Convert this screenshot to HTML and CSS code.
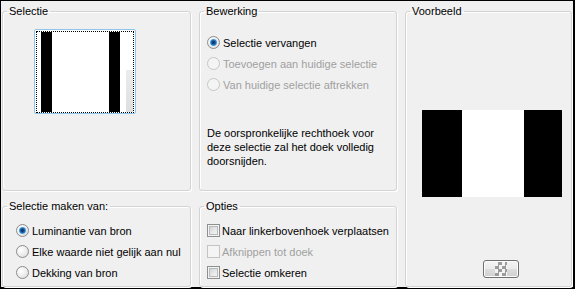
FILE: index.html
```html
<!DOCTYPE html>
<html lang="nl">
<head>
<meta charset="utf-8">
<title>Selectie</title>
<link rel="stylesheet" href="styles.css">
</head>
<body>
<div class="window">
  <fieldset class="group g-sel">
    <legend>Selectie</legend>
    <div class="thumb">
      <div class="thumb-inner">
        <span class="t-pad"></span><span class="t-bar"></span><span class="t-mid"></span><span class="t-bar"></span><span class="t-side"></span>
      </div>
    </div>
  </fieldset>

  <fieldset class="group g-bew">
    <legend>Bewerking</legend>
    <div class="rows rows-bew">
      <label class="opt"><span class="radio checked"></span>Selectie vervangen</label>
      <label class="opt disabled"><span class="radio"></span>Toevoegen aan huidige selectie</label>
      <label class="opt disabled"><span class="radio"></span>Van huidige selectie aftrekken</label>
    </div>
    <p class="note">De oorspronkelijke rechthoek voor<br>deze selectie zal het doek volledig<br>doorsnijden.</p>
  </fieldset>

  <fieldset class="group g-prev">
    <legend>Voorbeeld</legend>
    <div class="preview"><span class="p-black p-l"></span><span class="p-white"></span><span class="p-black p-r"></span></div>
    <button class="bg-btn" type="button"><span class="checker"></span></button>
  </fieldset>

  <fieldset class="group g-src">
    <legend>Selectie maken van:</legend>
    <div class="rows rows-src">
      <label class="opt"><span class="radio checked"></span>Luminantie van bron</label>
      <label class="opt"><span class="radio"></span>Elke waarde niet gelijk aan nul</label>
      <label class="opt"><span class="radio"></span>Dekking van bron</label>
    </div>
  </fieldset>

  <fieldset class="group g-opt">
    <legend>Opties</legend>
    <div class="rows rows-opt">
      <label class="opt"><span class="check"></span>Naar linkerbovenhoek verplaatsen</label>
      <label class="opt disabled"><span class="check"></span>Afknippen tot doek</label>
      <label class="opt"><span class="check"></span>Selectie omkeren</label>
    </div>
  </fieldset>
</div>
</body>
</html>
```

FILE: styles.css
```css
html, body {
  margin: 0;
  padding: 0;
  background: #000;
}

body {
  font-family: "Liberation Sans", Arial, sans-serif;
  font-size: 11px;
  color: #000;
}

.window {
  box-sizing: border-box;
  width: 575px;
  height: 289px;
  border-style: solid;
  border-color: #000;
  border-width: 1px 2px 2px 1px;
  background: #f0f0f0;
  padding: 4px 0 0 1px;
  display: grid;
  grid-template-columns: 189px 198px 167px;
  grid-template-rows: 186px 87px;
  column-gap: 8px;
  row-gap: 9px;
}

.group {
  margin: 0;
  padding: 0;
  min-width: 0;
  border: 1px solid #d3d3d3;
  border-radius: 3px;
  box-shadow: inset 1px 1px 0 #fff, 1px 1px 0 #fff;
}

.group legend {
  margin-left: 4px;
  padding: 0 2px;
  line-height: 13px;
  font-size: 11px;
}

.g-sel { grid-column: 1; grid-row: 1; }
.g-bew { grid-column: 2; grid-row: 1; }
.g-prev { grid-column: 3; grid-row: 1 / span 2; }
.g-src { grid-column: 1; grid-row: 2; }
.g-opt { grid-column: 2; grid-row: 2; }

/* selection thumbnail */
.thumb {
  box-sizing: border-box;
  width: 102px;
  height: 85px;
  margin: 11px 0 0 31px;
  border: 1px solid #8cc6ec;
  border-radius: 2px;
  padding: 1px 1px 0 1px;
  background: #fff;
}

.thumb-inner {
  box-sizing: border-box;
  height: 82px;
  border: 1px dotted #000;
  display: flex;
  background: #fff;
}

.t-pad { width: 4px; }
.t-bar { width: 11px; background: #000; }
.t-mid { width: 57px; }
.t-side {
  flex: 1;
  background: linear-gradient(to bottom, transparent 38px, #ececec 38px, #dedede) right top / 7px 100% no-repeat;
}

/* option rows */
.rows { display: flex; flex-direction: column; }
.rows-bew { padding: 14px 0 0 7px; }
.rows-src { padding: 7px 0 0 13px; }
.rows-opt { padding: 7px 0 0 7px; }

.opt {
  display: flex;
  align-items: center;
  height: 21px;
  white-space: nowrap;
}

.opt.disabled { color: #a0a0a0; }

.radio {
  flex: none;
  box-sizing: border-box;
  width: 13px;
  height: 13px;
  margin-right: 3px;
  border-radius: 50%;
  border: 1px solid #8c8c8c;
  background: radial-gradient(circle at 35% 35%, #ffffff 0, #ececec 55%, #d2d2d2 100%);
}

.radio.checked {
  background:
    radial-gradient(circle at 50% 50%, #0b2d57 0, #164d8c 1.6px, #2f86cf 2.8px, #79c0ee 3.4px, rgba(255,255,255,0) 3.9px),
    radial-gradient(circle at 35% 35%, #ffffff 0, #ececec 55%, #d2d2d2 100%);
}

.disabled .radio {
  border-color: #c6c6c6;
  background: #f4f4f4;
}

.check {
  flex: none;
  box-sizing: border-box;
  width: 13px;
  height: 13px;
  margin-right: 2px;
  border: 1px solid #8e8f8f;
  background: linear-gradient(135deg, #c6cacd 0, #e9e9e9 55%, #f7f7f7 100%);
  box-shadow: inset 0 0 0 1px #f4f4f4, inset 0 0 0 2px #b8bbbd;
}

.disabled .check {
  border-color: #c4c4c4;
  background: #f4f4f4;
  box-shadow: none;
}

.note {
  margin: 31px 0 0 7px;
  line-height: 14px;
}

/* preview */
.preview {
  display: flex;
  width: 140px;
  height: 87px;
  margin: 92px 0 0 16px;
}

.p-black { background: #000; }
.p-l { width: 40px; }
.p-r { width: 38px; }
.p-white { width: 62px; background: #fff; }

.bg-btn {
  display: flex;
  align-items: center;
  justify-content: center;
  box-sizing: border-box;
  width: 36px;
  height: 18px;
  margin: 63px 0 0 77px;
  padding: 0;
  border: 1px solid #707070;
  border-radius: 3px;
  background: linear-gradient(to bottom, #f4f4f4 0, #ebebeb 48%, #dddddd 52%, #cfcfcf 100%);
  box-shadow: inset 0 0 0 1px #fcfcfc;
}

.checker {
  width: 12px;
  height: 14px;
  background: repeating-conic-gradient(#9c9c9c 0 25%, #f4f4f4 0 50%) 0 0 / 7px 7px;
}
```
